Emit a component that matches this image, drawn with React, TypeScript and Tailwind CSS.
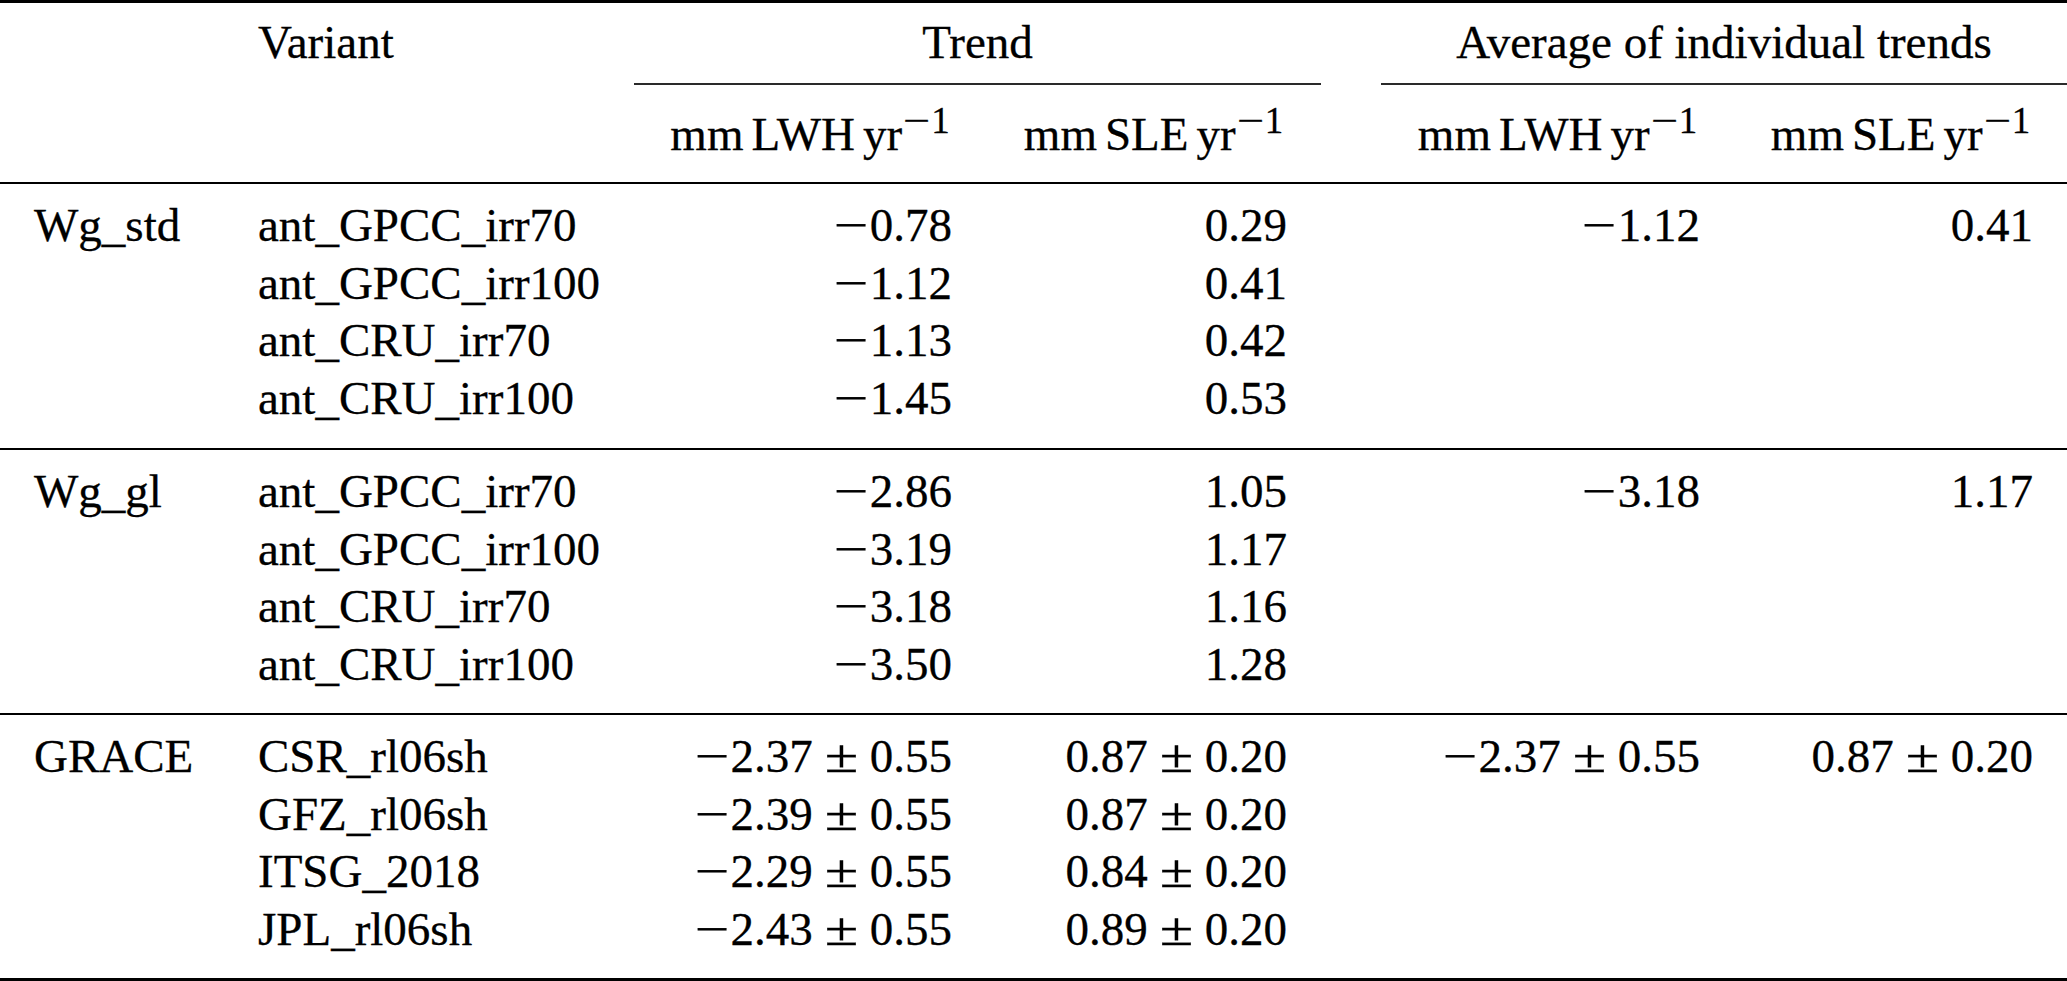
import React from "react";

const COLS = "grid grid-cols-[224px_410px_352px_335px_60px_353px_333px]";

function Num({ v }: { v?: string }) {
  if (!v) return null;
  const parts = v.split("±");
  const a = parts[0];
  const b = parts[1];
  const neg = a.startsWith("−");
  const body = neg ? a.slice(1) : a;
  return (
    <span className="whitespace-nowrap">
      {neg && <span className="inline-block w-[36.5px] text-center scale-x-[1.3]">−</span>}
      {body}
      {b !== undefined && (
        <>
          <span className="inline-block w-[57px] text-center scale-x-[1.3]">±</span>
          {b}
        </>
      )}
    </span>
  );
}

function Unit({ q }: { q: string }) {
  return (
    <span className="whitespace-nowrap">
      mm<span className="ml-[8px]">{q}</span>
      <span className="ml-[8px]">yr</span>
      <span className="relative top-[-17px] text-[37px] leading-none">
        <span className="inline-block w-[29px] text-center scale-x-[1.3]">−</span>1
      </span>
    </span>
  );
}

type Row = { name: string; t1: string; t2: string; a1?: string; a2?: string };
type Block = { label: string; rows: Row[]; h: string };

const blocks: Block[] = [
  {
    label: "Wg_std",
    h: "h-[264px]",
    rows: [
      { name: "ant_GPCC_irr70", t1: "−0.78", t2: "0.29", a1: "−1.12", a2: "0.41" },
      { name: "ant_GPCC_irr100", t1: "−1.12", t2: "0.41" },
      { name: "ant_CRU_irr70", t1: "−1.13", t2: "0.42" },
      { name: "ant_CRU_irr100", t1: "−1.45", t2: "0.53" },
    ],
  },
  {
    label: "Wg_gl",
    h: "h-[263px]",
    rows: [
      { name: "ant_GPCC_irr70", t1: "−2.86", t2: "1.05", a1: "−3.18", a2: "1.17" },
      { name: "ant_GPCC_irr100", t1: "−3.19", t2: "1.17" },
      { name: "ant_CRU_irr70", t1: "−3.18", t2: "1.16" },
      { name: "ant_CRU_irr100", t1: "−3.50", t2: "1.28" },
    ],
  },
  {
    label: "GRACE",
    h: "h-[263px]",
    rows: [
      { name: "CSR_rl06sh", t1: "−2.37±0.55", t2: "0.87±0.20", a1: "−2.37±0.55", a2: "0.87±0.20" },
      { name: "GFZ_rl06sh", t1: "−2.39±0.55", t2: "0.87±0.20" },
      { name: "ITSG_2018", t1: "−2.29±0.55", t2: "0.84±0.20" },
      { name: "JPL_rl06sh", t1: "−2.43±0.55", t2: "0.89±0.20" },
    ],
  },
];

export default function App() {
  return (
    <div className="w-[2067px] h-[981px] overflow-hidden bg-white text-black font-['Liberation_Serif','Times_New_Roman',serif] text-[47px] [-webkit-text-stroke:0.3px_#000]">
      <div className="h-[3px] bg-black" />
      <div className={`${COLS} h-[80px] leading-[78px]`}>
        <div />
        <div className="px-[34px] whitespace-nowrap">Variant</div>
        <div className="col-span-2 text-center whitespace-nowrap">Trend</div>
        <div />
        <div className="col-span-2 text-center whitespace-nowrap">Average of individual trends</div>
      </div>
      <div className={`${COLS} h-[2px]`}>
        <div className="col-start-3 col-span-2 bg-[#2a2a2a]" />
        <div className="col-start-6 col-span-2 bg-[#2a2a2a]" />
      </div>
      <div className={`${COLS} h-[97px] pt-[1px] leading-[96px]`}>
        <div />
        <div />
        <div className="px-[34px] text-center">
          <Unit q="LWH" />
        </div>
        <div className="px-[34px] text-center">
          <Unit q="SLE" />
        </div>
        <div />
        <div className="px-[34px] text-center">
          <Unit q="LWH" />
        </div>
        <div className="px-[34px] text-center">
          <Unit q="SLE" />
        </div>
      </div>
      {blocks.map((b) => (
        <React.Fragment key={b.label}>
          <div className="h-[2px] bg-black" />
          <div className={`${b.h} pt-[13px]`}>
            {b.rows.map((r, i) => (
              <div key={r.name} className={`${COLS} leading-[57.67px] h-[57.67px]`}>
                <div className="px-[34px] whitespace-nowrap">{i === 0 ? b.label : ""}</div>
                <div className="px-[34px] whitespace-nowrap">{r.name}</div>
                <div className="px-[34px] text-right">
                  <Num v={r.t1} />
                </div>
                <div className="px-[34px] text-right">
                  <Num v={r.t2} />
                </div>
                <div />
                <div className="px-[34px] text-right">
                  <Num v={r.a1} />
                </div>
                <div className="px-[34px] text-right">
                  <Num v={r.a2} />
                </div>
              </div>
            ))}
          </div>
        </React.Fragment>
      ))}
      <div className="h-[3px] bg-black" />
    </div>
  );
}
